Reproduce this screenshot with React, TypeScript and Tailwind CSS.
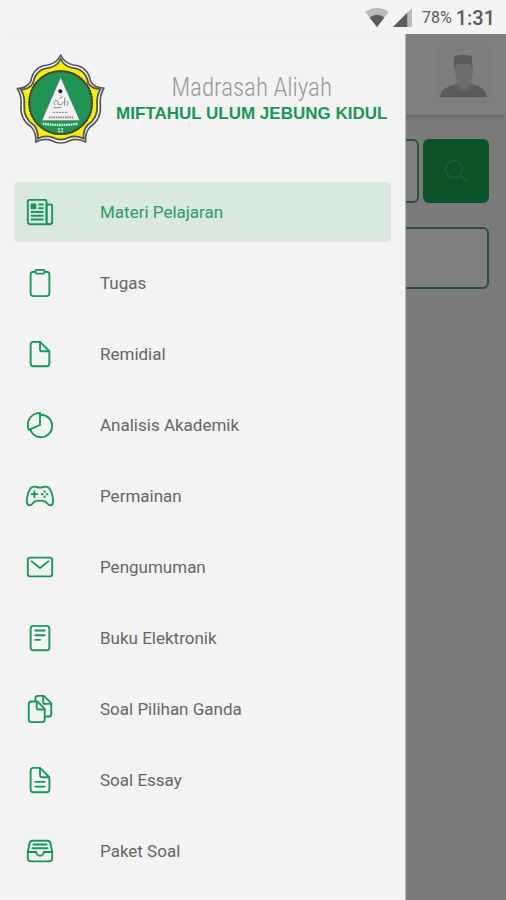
import React, { useState } from 'react';
import type { IconType } from 'react-icons';
import {
  IoClipboardOutline,
  IoDocumentOutline,
  IoDocumentTextOutline,
  IoDocumentsOutline,
  IoFileTrayFullOutline,
  IoGameControllerOutline,
  IoMailOutline,
  IoNewspaperOutline,
  IoPieChartOutline,
  IoReaderOutline,
  IoSearchOutline,
} from 'react-icons/io5';

interface MenuItem {
  label: string;
  icon: IconType;
}

const menuItems: MenuItem[] = [
  { label: 'Materi Pelajaran', icon: IoNewspaperOutline },
  { label: 'Tugas', icon: IoClipboardOutline },
  { label: 'Remidial', icon: IoDocumentOutline },
  { label: 'Analisis Akademik', icon: IoPieChartOutline },
  { label: 'Permainan', icon: IoGameControllerOutline },
  { label: 'Pengumuman', icon: IoMailOutline },
  { label: 'Buku Elektronik', icon: IoReaderOutline },
  { label: 'Soal Pilihan Ganda', icon: IoDocumentsOutline },
  { label: 'Soal Essay', icon: IoDocumentTextOutline },
  { label: 'Paket Soal', icon: IoFileTrayFullOutline },
];

const badgePath =
  'M140 12 Q150 36 178 42 Q222 46 230 92 Q244 112 270 111 Q256 134 259 164 Q262 206 228 228 Q212 246 215 273 Q190 260 166 269 Q140 283 114 269 Q90 260 65 273 Q68 246 52 228 Q18 206 21 164 Q24 134 10 113 Q36 112 50 92 Q58 46 102 42 Q130 36 140 12 Z';

const SchoolLogo = () => (
  <svg viewBox="0 0 282 294" className="h-[98px] w-[94px] shrink-0" role="img" aria-label="Logo Miftahul Ulum">
    <path d={badgePath} fill="#fff" stroke="#555" strokeWidth="5" strokeLinejoin="round" />
    <g transform="translate(140 152) scale(.92) translate(-140 -152)">
      <path d={badgePath} fill="#f7ec13" stroke="#555" strokeWidth="6" strokeLinejoin="round" />
    </g>
    <circle cx="140" cy="155" r="94" fill="#209455" stroke="#4b5a2c" strokeWidth="6" />
    <circle cx="140" cy="155" r="95" fill="none" stroke="#2e3a20" strokeWidth="4" strokeDasharray="5 4" />
    <path d="M140 78 L198 209 H83 Z" fill="#f2f2f2" stroke="#52685a" strokeWidth="2" />
    <circle cx="139" cy="121" r="6" fill="#222" />
    <g fill="none" stroke="#888" strokeWidth="3">
      <path d="M122 162 q-6-14 6-14 q8 2 4 12 q12 4 16-8 M152 140 v24 M137 142 l8-5 M118 170 h24 M158 150 q8 6 2 14" />
      <path d="M116 184 h46" strokeDasharray="7 2" />
      <path d="M104 199 h74" strokeDasharray="5 2" strokeWidth="5" />
    </g>
    <path d="M86 218 Q140 226 192 218" fill="none" stroke="#d7ebdf" strokeWidth="7" strokeDasharray="5 2" />
    <path d="M131 234 h18 M132 242 h16" fill="none" stroke="#c0dfcd" strokeWidth="5" strokeDasharray="7 3" />
  </svg>
);

const Avatar = () => (
  <svg viewBox="0 0 56 56" className="size-14" role="img" aria-label="Profil">
    <rect width="56" height="56" fill="#fbfbfb" />
    <path d="M4 50 Q5 42 12 40 L22 36 H34 L44 40 Q50 43 51 50 Z" fill="#b4b4b4" />
    <path d="M21 32 H35 V38 L28 44 L21 38 Z" fill="#d8d8d8" />
    <path d="M19 17 H37 V25 Q37 37 28 38 Q19 37 19 25 Z" fill="#dcdcdc" />
    <path d="M18 22 V10 Q20 8 28 8 Q35 8 36 10 V22 Q35 18 33 17 H21 Q19 18 18 22 Z" fill="#b4b4b4" />
    <path d="M21 37 L28 43 L35 37 L38 39 L33 45 L28 43 L23 45 L18 39 Z" fill="#c0c0c0" />
  </svg>
);

const StatusBar = () => (
  <div className="flex h-[34px] shrink-0 items-center justify-end bg-[#f3f3f3] pt-px pr-[11px] text-[#5b5b5b]">
    <svg viewBox="0 0 26 20" className="mr-1 h-[19px] w-6" aria-label="Wi-Fi" preserveAspectRatio="none">
      <path d="M0 4 Q13 -4 26 4 L13 20 Z" fill="#bbb" />
      <path d="M5 10 Q13 4 21 10 L13 20 Z" fill="#5b5b5b" />
    </svg>
    <svg viewBox="0 0 20 20" className="mr-[10px] size-[19px]" aria-label="Sinyal">
      <path d="M20 0 V20 H0 Z" fill="#bbb" />
      <path d="M15 5 V20 H0 Z" fill="#5b5b5b" />
    </svg>
    <span className="mr-1 text-base">78%</span>
    <span className="text-xl font-medium">1:31</span>
  </div>
);

const HomeScreen = () => (
  <div className="flex-1 bg-[#f7f7f7]">
    <header className="flex h-[81px] items-center justify-end bg-white pr-[14px] shadow-md">
      <Avatar />
    </header>
    <div className="flex flex-col gap-6 pt-6 pr-[17px] pl-4">
      <div className="flex gap-1">
        <input
          type="text"
          aria-label="Cari"
          className="h-16 min-w-0 flex-1 rounded-md border-2 border-[#4ea280] bg-white px-4 outline-none"
        />
        <button aria-label="Cari" className="flex h-16 w-[66px] items-center justify-center rounded-md bg-[#18a655] text-[#42b477]">
          <IoSearchOutline size={28} />
        </button>
      </div>
      <div className="h-[62px] rounded-md border-2 border-[#4ea280] bg-white" />
    </div>
  </div>
);

export default function App() {
  const [active, setActive] = useState('Materi Pelajaran');

  return (
    <div className="flex min-h-screen flex-col overflow-hidden font-['Roboto','Noto_Sans',sans-serif]">
      <StatusBar />
      <div className="relative flex flex-1 flex-col">
        <HomeScreen />
        <div className="absolute inset-0 bg-black/50" />

        <aside className="absolute inset-y-0 left-0 w-[calc(80%+1px)] border-r border-[#bbb] bg-[#f3f3f3]">
          <div className="flex items-center gap-2 pt-[17px] pl-[14px]">
            <SchoolLogo />
            <div className="flex flex-1 flex-col items-center pr-6 whitespace-nowrap">
              <p className="font-['Roboto_Condensed','Roboto',sans-serif] text-[25px] leading-7 font-light text-[#999]">Madrasah Aliyah</p>
              <h1 className="font-['Liberation_Sans',Arial,sans-serif] text-[17px] leading-6 font-bold text-[#18965a]">
                MIFTAHUL ULUM JEBUNG KIDUL
              </h1>
            </div>
          </div>

          <nav className="mt-[33px] flex flex-col gap-[11px] px-[14px]">
            {menuItems.map(({ label, icon: Icon }) => (
              <button
                key={label}
                onClick={() => setActive(label)}
                className={`flex h-[60px] w-full items-center gap-[45px] rounded-sm pl-[11px] text-left text-[17px] ${
                  active === label ? 'bg-[#d9e9e0] text-[#2b9c64]' : 'text-[#666]'
                }`}
              >
                <Icon size={30} className="shrink-0 text-[#18965a]" />
                <span className="pt-0.5">{label}</span>
              </button>
            ))}
          </nav>
        </aside>
      </div>
    </div>
  );
}
